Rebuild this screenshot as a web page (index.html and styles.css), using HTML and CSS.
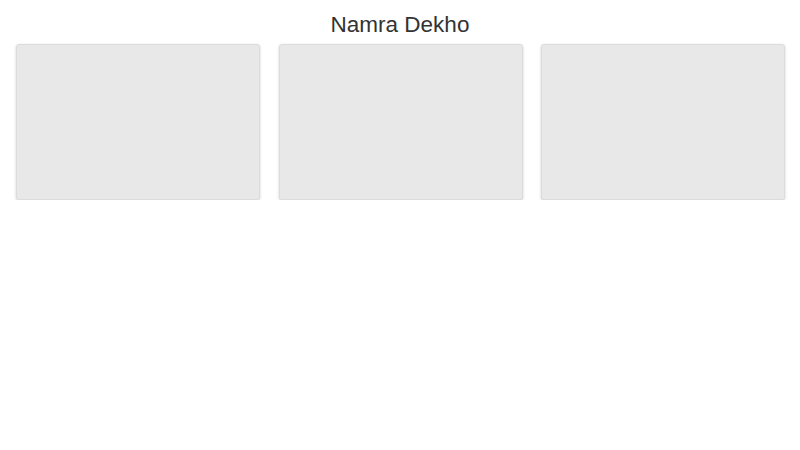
FILE: index.html
```html
<!DOCTYPE html>
<html>
<head>
<meta charset="utf-8">
<link rel="stylesheet" href="styles.css">
</head>
<body>
<h1 class="title">Namra Dekho</h1>
<div class="grid">
  <div class="card"></div>
  <div class="card"></div>
  <div class="card"></div>
</div>
</body>
</html>
```
FILE: styles.css
```css
html, body {
  margin: 0;
  padding: 0;
  background: #fff;
}
body {
  font-family: "Liberation Sans", Arial, sans-serif;
  color: #333;
}
.title {
  margin: 0;
  padding: 11px 0 5px;
  font-size: 22.5px;
  line-height: 28px;
  font-weight: normal;
  text-align: center;
  color: #333;
}
.grid {
  display: grid;
  grid-template-columns: repeat(3, 1fr);
  gap: 18.5px;
  padding: 0 15px 0 16px;
}
.card {
  height: 154px;
  background: #e8e8e8;
  border: 1px solid #dcdcdc;
  border-radius: 3px;
  box-shadow: 0 1px 3px rgba(0, 0, 0, 0.18);
}
```
